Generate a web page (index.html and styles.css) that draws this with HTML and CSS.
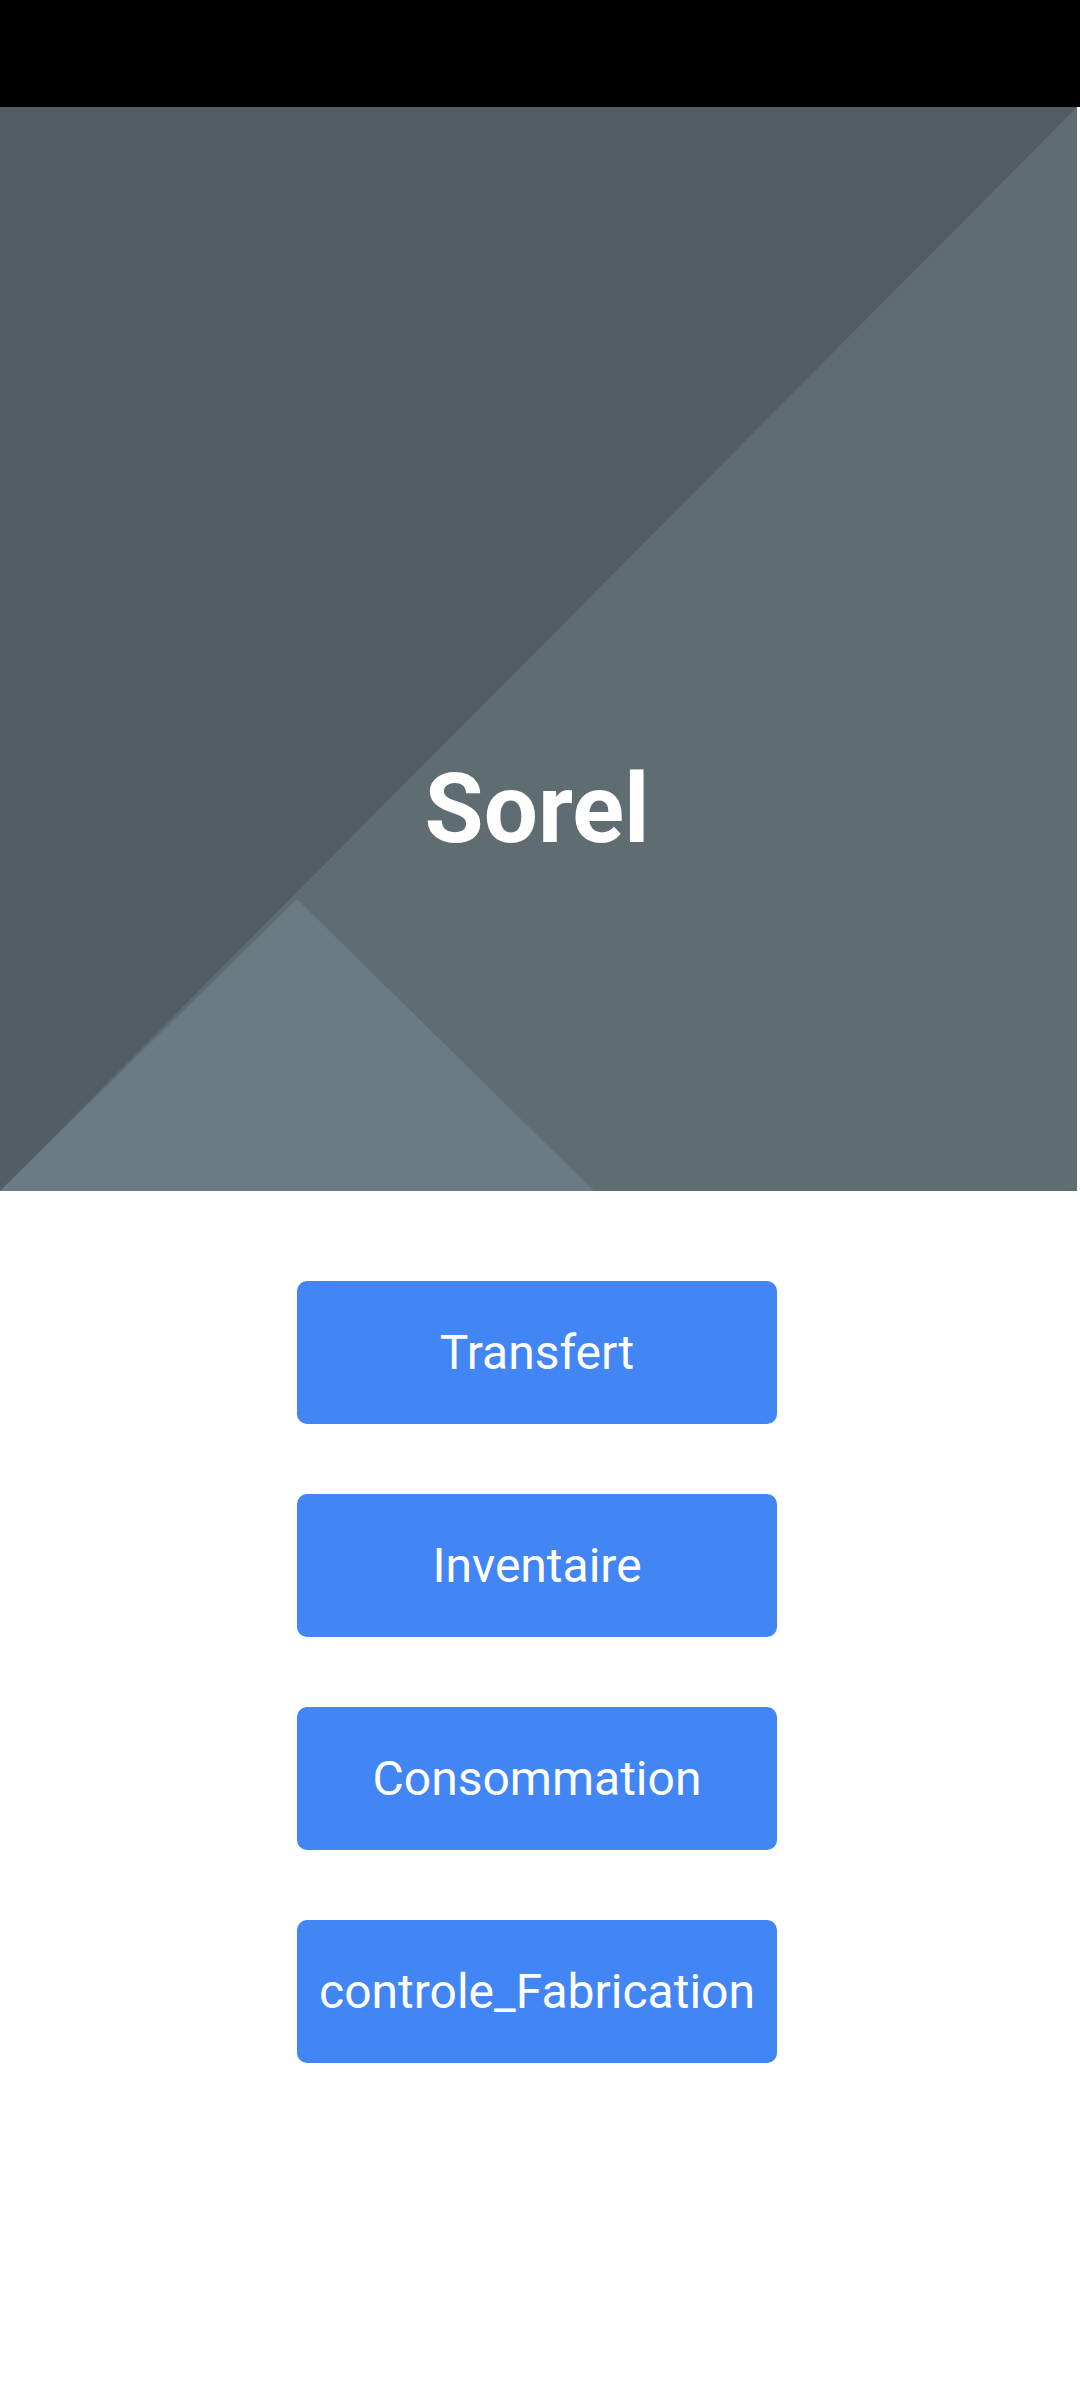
FILE: index.html
```html
<!DOCTYPE html>
<html lang="fr">
<head>
<meta charset="utf-8">
<title>Sorel</title>
<link rel="stylesheet" href="styles.css">
</head>
<body>
<div class="status-bar"></div>
<header class="hero">
  <svg class="hero-bg" viewBox="0 0 1077 1084" preserveAspectRatio="none" aria-hidden="true">
    <rect x="0" y="0" width="1077" height="1084" fill="#535c63"/>
    <polygon points="1077,0 1077,1084 0,1084" fill="#5f6d73"/>
    <polygon points="297,792 594,1084 0,1084" fill="#6a7b83"/>
  </svg>
  <h1 class="hero-title">Sorel</h1>
</header>
<main class="menu">
  <button class="menu-btn">Transfert</button>
  <button class="menu-btn">Inventaire</button>
  <button class="menu-btn">Consommation</button>
  <button class="menu-btn">controle_Fabrication</button>
</main>
</body>
</html>
```
FILE: styles.css
```css
html, body {
  margin: 0;
  padding: 0;
  background: #ffffff;
  font-family: Roboto, "Noto Sans", sans-serif;
}

.status-bar {
  height: 107px;
  background: #000000;
}

.hero {
  position: relative;
  width: 1077px;
  height: 1084px;
  overflow: hidden;
}

.hero-bg {
  position: absolute;
  inset: 0;
  width: 100%;
  height: 100%;
  display: block;
}

.hero-title {
  position: relative;
  margin: 0;
  padding-top: 646px;
  padding-right: 3px;
  text-align: center;
  color: #ffffff;
  font-size: 96px;
  font-weight: 700;
  line-height: normal;
}

.menu {
  display: flex;
  flex-direction: column;
  align-items: center;
  gap: 70px;
  padding-top: 90px;
  padding-right: 6px;
}

.menu-btn {
  width: 480px;
  height: 143px;
  border: none;
  border-radius: 10px;
  background: #4285f4;
  color: #ffffff;
  font-family: Roboto, "Noto Sans", sans-serif;
  font-size: 48px;
  font-weight: 400;
  padding: 0;
  margin: 0;
}
```
